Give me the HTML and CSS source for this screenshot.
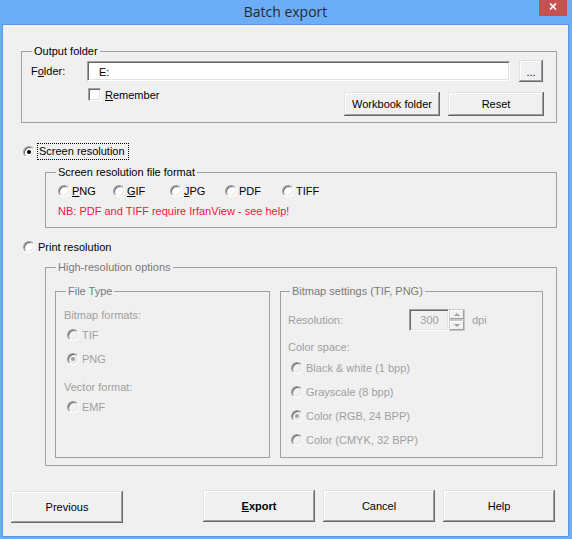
FILE: index.html
```html
<!DOCTYPE html>
<html>
<head>
<meta charset="utf-8">
<title>Batch export</title>
<link rel="stylesheet" href="styles.css">
</head>
<body>
<div class="window">
  <div class="titlebar">
    <span class="tb-spacer"></span>
    <span class="title">Batch export</span>
    <span class="close"><svg width="8" height="7" viewBox="0 0 8 7"><path d="M1 0.5 L7 6.5 M7 0.5 L1 6.5" stroke="#fff" stroke-width="1.7" fill="none"/></svg></span>
  </div>
  <div class="client">
    <fieldset class="group out">
      <legend>Output folder</legend>
      <div class="folder-row">
        <span class="folder-lbl">F<u>o</u>lder:</span>
        <div class="textbox">E:</div>
        <button class="btn browse">...</button>
      </div>
      <div class="rem-row">
        <label class="check"><span class="cbox"></span><span><u>R</u>emember</span></label>
        <div class="rem-btns">
          <button class="btn wb">Workbook folder</button>
          <button class="btn wb">Reset</button>
        </div>
      </div>
    </fieldset>

    <div class="opt screen-opt">
      <span class="radio on"></span>
      <span class="focus">Screen resolution</span>
    </div>

    <fieldset class="group screen">
      <legend>Screen resolution file format</legend>
      <div class="formats">
        <span class="fmt"><span class="radio"></span><span><u>P</u>NG</span></span>
        <span class="fmt"><span class="radio"></span><span><u>G</u>IF</span></span>
        <span class="fmt"><span class="radio"></span><span><u>J</u>PG</span></span>
        <span class="fmt"><span class="radio"></span><span>PDF</span></span>
        <span class="fmt"><span class="radio"></span><span>TIFF</span></span>
      </div>
      <div class="nb">NB: PDF and TIFF require IrfanView - see help!</div>
    </fieldset>

    <div class="opt print-opt">
      <span class="radio"></span>
      <span>Print resolution</span>
    </div>

    <fieldset class="group hires disabled">
      <legend>High-resolution options</legend>
      <div class="hires-cols">
        <fieldset class="group inner filetype">
          <legend>File Type</legend>
          <div class="dlbl">Bitmap formats:</div>
          <div class="dopt m6"><span class="radio dis"></span><span>TIF</span></div>
          <div class="dopt m10"><span class="radio dis on"></span><span>PNG</span></div>
          <div class="dlbl m14">Vector format:</div>
          <div class="dopt m6"><span class="radio dis"></span><span>EMF</span></div>
        </fieldset>
        <fieldset class="group inner bitmap">
          <legend>Bitmap settings (TIF, PNG)</legend>
          <div class="res-row">
            <span class="res-lbl">Resolution:</span>
            <div class="spinbox">300</div>
            <div class="spin">
              <span class="spin-btn"><span class="tri up"></span></span>
              <span class="spin-btn"><span class="tri down"></span></span>
            </div>
            <span class="dpi">dpi</span>
          </div>
          <div class="dlbl m9">Color space:</div>
          <div class="dopt m7"><span class="radio dis"></span><span>Black &amp; white (1 bpp)</span></div>
          <div class="dopt m10"><span class="radio dis"></span><span>Grayscale (8 bpp)</span></div>
          <div class="dopt m10"><span class="radio dis on"></span><span>Color (RGB, 24 BPP)</span></div>
          <div class="dopt m10"><span class="radio dis"></span><span>Color (CMYK, 32 BPP)</span></div>
        </fieldset>
      </div>
    </fieldset>

    <div class="bottom">
      <button class="btn big prev">Previous</button>
      <button class="btn big export"><u>E</u>xport</button>
      <button class="btn big">Cancel</button>
      <button class="btn big">Help</button>
    </div>
  </div>
</div>
</body>
</html>
```

FILE: styles.css
```css
* { box-sizing: border-box; }
html, body { margin: 0; padding: 0; }
body {
  width: 572px;
  height: 539px;
  overflow: hidden;
  background: #6badf6;
  font-family: "Liberation Sans", Arial, sans-serif;
  font-size: 11px;
  line-height: 14px;
  color: #000;
}
.window {
  width: 572px;
  height: 539px;
  background: #6badf6;
  padding: 0 3px 2px 2px;
  display: flex;
  flex-direction: column;
}
.titlebar {
  height: 24px;
  flex: none;
  display: grid;
  grid-template-columns: 1fr auto 1fr;
  align-items: start;
}
.title {
  font-family: "Open Sans", "Noto Sans", sans-serif;
  font-size: 14px;
  line-height: 24px;
  color: #2a2a2a;
}
.close {
  justify-self: end;
  width: 28px;
  height: 16px;
  margin-right: 2px;
  background: #c75050;
  display: flex;
  justify-content: center;
  padding-top: 3px;
}
.close svg { display: block; }
.client {
  flex: 1;
  background: #f0f0f0;
  border: 1px solid #5a98e2;
  padding: 0 11px 0 18px;
}

/* group boxes */
fieldset.group {
  margin: 0;
  border: 1px solid #a0a0a0;
  min-width: 0;
}
fieldset.group > legend {
  padding: 0 2px;
  line-height: 14px;
  height: 14px;
}
.out {
  margin-top: 19px !important;
  padding: 2px 12px 6px 9px;
}
.out > legend { margin-left: 1px; }

.folder-row {
  display: flex;
  align-items: center;
  height: 22px;
}
.folder-lbl { width: 56px; }
.textbox {
  width: 423px;
  height: 20px;
  background: #fff;
  border: 1px solid;
  border-color: #a0a0a0 #fff #fff #a0a0a0;
  box-shadow: inset 1px 1px #696969, inset -1px -1px #e3e3e3;
  padding: 3px 0 0 11px;
  line-height: 14px;
}
.btn {
  font-family: "Liberation Sans", Arial, sans-serif;
  font-size: 11px;
  color: #000;
  background: #f0f0f0;
  border: none;
  padding: 0;
  margin: 0;
  box-shadow: inset -1px -1px #696969, inset 1px 1px #e3e3e3, inset -2px -2px #a0a0a0, inset 2px 2px #fff;
}
.browse {
  width: 24px;
  height: 22px;
  margin-left: 9px;
  line-height: 14px;
  padding-top: 2px;
}
.rem-row {
  display: flex;
  align-items: flex-start;
  margin-top: 6px;
}
.check {
  display: flex;
  align-items: center;
  gap: 4px;
  margin-left: 57px;
  height: 13px;
}
.cbox {
  width: 13px;
  height: 13px;
  background: #fff;
  border: 1px solid;
  border-color: #a0a0a0 #fff #fff #a0a0a0;
  box-shadow: inset 1px 1px #696969, inset -1px -1px #e3e3e3;
}
.rem-btns {
  margin-left: auto;
  margin-top: 4px;
  display: flex;
  gap: 8px;
}
.wb { width: 96px; height: 24px; }

/* radios */
.radio {
  position: relative;
  flex: none;
  width: 12px;
  height: 12px;
  border-radius: 50%;
  background: #fff;
  border: 1px solid;
  border-color: #a0a0a0 #fff #fff #a0a0a0;
  box-shadow: inset 1px 1px #696969, inset -1px -1px #e3e3e3;
}
.radio.on::after {
  content: "";
  position: absolute;
  left: 3px;
  top: 3px;
  width: 4px;
  height: 4px;
  border-radius: 50%;
  background: #000;
}
.radio.dis { background: #f0f0f0; }
.radio.dis.on::after { background: #a0a0a0; }

.opt {
  display: flex;
  align-items: center;
}
.screen-opt {
  margin-top: 20px;
  height: 17px;
  padding-left: 2px;
  gap: 2px;
}
.focus {
  border: 1px dotted #000;
  height: 17px;
  line-height: 15px;
  padding: 0 3px 0 1px;
}
.screen {
  margin: 5px 0 0 24px !important;
  padding: 5px 12px 9px 12px;
}
.screen > legend { margin-left: -2px; }
.formats {
  display: grid;
  grid-template-columns: 55px 57px 55px 57px 56px;
  height: 13px;
  align-items: center;
}
.fmt {
  display: flex;
  align-items: center;
  gap: 2px;
}
.nb {
  margin-top: 7px;
  color: #f8143a;
}
.print-opt {
  margin-top: 12px;
  height: 14px;
  padding-left: 2px;
  gap: 3px;
}
.hires {
  margin: 6px 0 0 24px !important;
  padding: 10px 13px 7px 9px;
}
.hires > legend { margin-left: 1px; }
.disabled legend { color: #7a7a7a; }
.hires-cols {
  display: flex;
  gap: 10px;
}
.inner {
  height: 174px;
}
.filetype {
  width: 215px;
  flex: none;
  padding: 10px 8px 0 8px;
}
.filetype > legend { margin-left: 2px; }
.bitmap {
  flex: 1;
  padding: 11px 7px 0 7px;
}
.bitmap > legend { margin-left: 2px; }
.dlbl { color: #a0a0a0; height: 14px; }
.dopt {
  display: flex;
  align-items: center;
  gap: 3px;
  height: 14px;
  margin-left: 3px;
  color: #a0a0a0;
}
.m6 { margin-top: 6px; }
.m7 { margin-top: 7px; }
.m9 { margin-top: 9px; }
.m10 { margin-top: 10px; }
.m14 { margin-top: 14px; }

.res-row {
  display: flex;
  align-items: center;
  height: 22px;
  color: #a0a0a0;
}
.res-lbl { width: 121px; }
.spinbox {
  width: 40px;
  height: 22px;
  background: #f0f0f0;
  border: 1px solid;
  border-color: #a0a0a0 #fff #fff #a0a0a0;
  box-shadow: inset 1px 1px #696969, inset -1px -1px #e3e3e3;
  text-align: center;
  line-height: 20px;
  padding-left: 1px;
}
.spin {
  display: flex;
  flex-direction: column;
  width: 16px;
  height: 22px;
}
.spin-btn {
  height: 11px;
  display: flex;
  align-items: center;
  justify-content: center;
  background: #f0f0f0;
  box-shadow: inset -1px -1px #a0a0a0, inset 1px 1px #fff;
  border: 1px solid #c8c8c8;
}
.tri {
  width: 0;
  height: 0;
  border-left: 3px solid transparent;
  border-right: 3px solid transparent;
}
.tri.up { border-bottom: 3px solid #a0a0a0; }
.tri.down { border-top: 3px solid #a0a0a0; }
.dpi { margin-left: 7px; }

.bottom {
  display: flex;
  align-items: flex-start;
  gap: 8px;
  margin: 24px 0 0 -10px;
}
.big {
  width: 112px;
  height: 32px;
}
.prev {
  margin-top: 1px;
  margin-right: 72px;
}
.export { font-weight: bold; }
```
